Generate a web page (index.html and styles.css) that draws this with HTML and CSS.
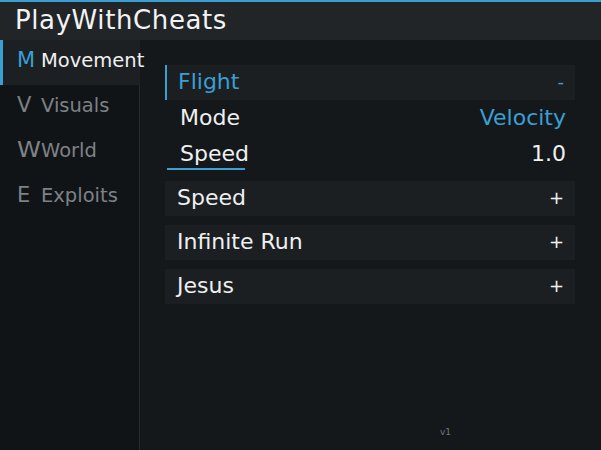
FILE: index.html
```html
<!DOCTYPE html>
<html>
<head>
<meta charset="utf-8">
<link rel="stylesheet" href="styles.css">
</head>
<body>
<div class="app">
  <div class="topline"></div>
  <div class="header"><span class="title">PlayWithCheats</span></div>
  <div class="main">
    <nav class="sidebar">
      <div class="tab active"><span class="key">M</span><span class="label">Movement</span></div>
      <div class="tab"><span class="key">V</span><span class="label">Visuals</span></div>
      <div class="tab"><span class="key wide">W</span><span class="label">World</span></div>
      <div class="tab"><span class="key">E</span><span class="label">Exploits</span></div>
    </nav>
    <section class="content">
      <div class="module open">
        <div class="mod-head"><span>Flight</span><span class="toggle">-</span></div>
        <div class="setting"><span>Mode</span><span class="value blue">Velocity</span></div>
        <div class="setting selected"><span>Speed</span><span class="value">1.0</span></div>
      </div>
      <div class="module">
        <div class="mod-head"><span>Speed</span><span class="toggle">+</span></div>
      </div>
      <div class="module">
        <div class="mod-head"><span>Infinite Run</span><span class="toggle">+</span></div>
      </div>
      <div class="module">
        <div class="mod-head"><span>Jesus</span><span class="toggle">+</span></div>
      </div>
      <div class="version">v1</div>
    </section>
  </div>
</div>
</body>
</html>
```
FILE: styles.css
```css
* { box-sizing: border-box; }
html, body { margin: 0; padding: 0; }
body {
  background: #15181a;
  font-family: "DejaVu Sans", sans-serif;
  color: #eceeef;
}
.app {
  display: flex;
  flex-direction: column;
  height: 450px;
  width: 601px;
  overflow: hidden;
}
.topline {
  height: 2px;
  background: #3a9fd3;
  flex: none;
}
.header {
  height: 38px;
  background: #212528;
  display: flex;
  align-items: center;
  padding: 0 0 3px 15px;
  flex: none;
}
.title {
  font-size: 26px;
  letter-spacing: 0.6px;
  color: #f2f3f4;
}
.main {
  flex: 1;
  display: flex;
  min-height: 0;
}
.sidebar {
  width: 140px;
  flex: none;
  background: #111416;
  border-right: 1px solid #272b2e;
  display: flex;
  flex-direction: column;
}
.tab {
  height: 45px;
  display: flex;
  align-items: center;
  padding: 0 0 5px 17px;
  font-size: 19.5px;
  color: #7d8286;
  white-space: nowrap;
}
.tab .key { min-width: 24px; font-size: 21px; }
.tab .key.wide { transform: scaleX(1.15); transform-origin: left center; }
.tab.active {
  background: #1c2023;
  border-left: 3px solid #3a9fd3;
  padding-left: 14px;
  color: #eef0f1;
  margin-right: -1px;
}
.tab.active .key { color: #3a9fd3; }
.content {
  flex: 1;
  display: flex;
  flex-direction: column;
  padding: 25px 26px 0 25px;
  gap: 9px;
}
.module {
  display: flex;
  flex-direction: column;
}
.mod-head {
  height: 35px;
  background: #1c1f22;
  display: flex;
  align-items: center;
  justify-content: space-between;
  padding: 0 11px 2px 12px;
  font-size: 22px;
  color: #eef0f1;
}
.module.open .mod-head {
  border-left: 2px solid #3a9fd3;
  padding-left: 11px;
  color: #3a9fd3;
}
.toggle { font-size: 18px; }
.setting {
  height: 36px;
  display: flex;
  align-items: center;
  justify-content: space-between;
  padding: 0 9px 2px 15px;
  font-size: 22px;
  color: #eef0f1;
  position: relative;
}
.setting.selected::after {
  content: "";
  position: absolute;
  left: 2px;
  top: 32px;
  width: 78px;
  height: 2px;
  background: #3a9fd3;
}
.blue { color: #3a9fd3; }
.version {
  margin-top: auto;
  margin-bottom: 13px;
  margin-left: 275px;
  font-size: 9px;
  color: #70767a;
}
```
